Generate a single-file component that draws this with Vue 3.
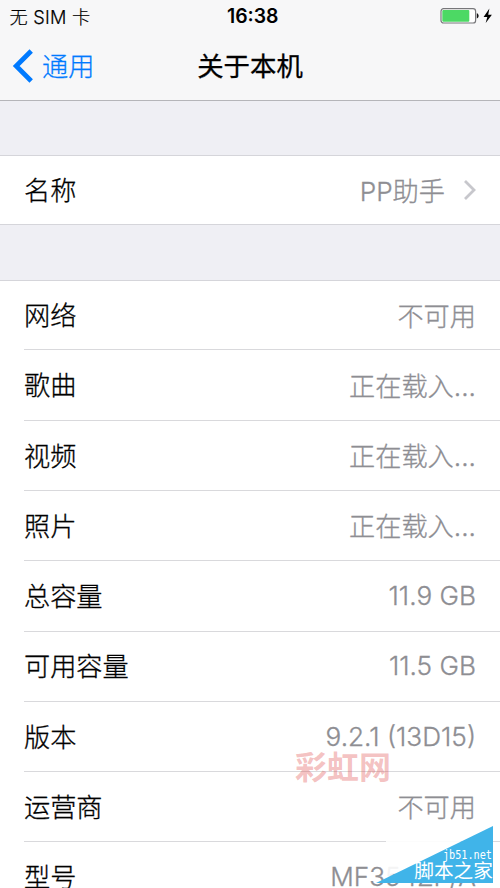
<script setup>
const rows = [
  { label: '网络', value: '不可用' },
  { label: '歌曲', value: '正在载入...' },
  { label: '视频', value: '正在载入...' },
  { label: '照片', value: '正在载入...' },
  { label: '总容量', value: '11.9 GB' },
  { label: '可用容量', value: '11.5 GB' },
  { label: '版本', value: '9.2.1 (13D15)' },
  { label: '运营商', value: '不可用' },
  { label: '型号', value: 'MF354ZP/A' },
]
</script>

<template>
  <div class="screen">
    <header class="top">
      <div class="status">
        <span class="carrier">无 SIM 卡</span>
        <span class="time">16:38</span>
        <span class="power">
          <svg width="54" height="18" viewBox="0 0 54 18">
            <rect x="1" y="1.7" width="34.6" height="14.3" rx="2.6" fill="#fff" stroke="#77777a" stroke-width="1.2" />
            <rect x="2.3" y="3" width="27" height="11.7" rx="1" fill="#4cd964" />
            <path d="M36.8 6.3c2.4.6 2.4 4.6 0 5.2z" fill="#111" />
            <path d="M49.4 1.6 43.6 9.9h3.7l-1.6 6 6.2-8.2h-3.7z" fill="#000" />
          </svg>
        </span>
      </div>
      <nav class="nav">
        <a class="back">
          <svg width="22" height="34" viewBox="0 0 22 34">
            <path d="M19.2 2 4.2 17l15 15" fill="none" stroke="#007aff" stroke-width="4.8" />
          </svg>
          <span class="nav-text">通用</span>
        </a>
        <h1 class="title nav-text">关于本机</h1>
        <span></span>
      </nav>
    </header>

    <section class="group name-group">
      <div class="row">
        <span class="label">名称</span>
        <span class="value">PP助手</span>
        <svg class="chevron" width="14" height="22" viewBox="0 0 14 22">
          <path d="M2 2l9 9-9 9" fill="none" stroke="#c7c7cc" stroke-width="2.8" />
        </svg>
      </div>
    </section>

    <section class="group">
      <div v-for="row in rows" :key="row.label" class="row">
        <span class="label">{{ row.label }}</span>
        <span class="value">{{ row.value }}</span>
      </div>
    </section>

    <div class="stamp">彩虹网</div>
    <div class="corner">
      <svg width="117" height="57" viewBox="0 0 117 57">
        <path d="M10 15 62 8 90 13 10 52z" fill="#fff" fill-opacity=".9" />
        <path d="M0 57 117 0v57z" fill="#40b4e9" />
      </svg>
      <span class="site">jb51.net</span>
      <span class="site-name">脚本之家</span>
    </div>
  </div>
</template>

<style>
body {
  background: #efeff4;
}
</style>

<style scoped>
.screen {
  position: relative;
  width: 500px;
  height: 888px;
  overflow: hidden;
  background: #efeff4;
  color: #000;
  font-family: Inter, "Noto Sans CJK SC", sans-serif;
}
.top {
  box-sizing: border-box;
  height: 101px;
  background: #f7f7f8;
  border-bottom: 1px solid #b5b5b9;
}
.status,
.nav {
  display: grid;
  grid-template-columns: 1fr auto 1fr;
  align-items: center;
}
.status {
  height: 32px;
  padding: 0 6px 0 9.5px;
}
.carrier {
  font-size: 18.2px;
  font-weight: 300;
  letter-spacing: 0.25px;
  padding-bottom: 1px;
  -webkit-text-stroke: 0.2px currentColor;
}
.time {
  font-size: 19.4px;
  font-weight: 600;
  padding-left: 2px;
}
.power {
  display: flex;
  justify-content: flex-end;
}
.nav {
  height: 68px;
  padding: 0 12px;
}
.nav-text {
  padding-bottom: 3px;
}
.back {
  display: flex;
  align-items: center;
  gap: 8px;
  color: #007aff;
  font-size: 26.2px;
  font-weight: 300;
  -webkit-text-stroke: 0.25px currentColor;
}
.title {
  margin: 0;
  font-size: 26.4px;
  font-weight: 400;
  -webkit-text-stroke: 0.3px #000;
}
.group {
  border-top: 1px solid #d5d5da;
  background: #fff;
}
.name-group {
  margin: 54px 0 55px;
  border-bottom: 1px solid #d5d5da;
}
.row {
  box-sizing: border-box;
  display: flex;
  align-items: center;
  height: 70.31px;
  margin-left: 24px;
  padding-right: 24px;
  border-bottom: 1px solid #d9d9dc;
  font-size: 26.2px;
  font-weight: 300;
  white-space: nowrap;
}
.row:first-child {
  height: 69.4px;
}
.name-group .row:first-child {
  height: 68px;
  border-bottom: 0;
  padding-right: 23px;
}
.label,
.value {
  padding-bottom: 1.6px;
  -webkit-text-stroke: 0.3px currentColor;
}
.value {
  margin-left: auto;
  color: #8e8e93;
  padding-bottom: 1px;
}
.chevron {
  margin-left: 18px;
}
.stamp {
  position: absolute;
  left: 295px;
  top: 750px;
  font-size: 32px;
  line-height: 36px;
  font-weight: 700;
  color: rgba(224, 82, 82, 0.36);
}
.corner {
  position: absolute;
  left: 376px;
  top: 826px;
  width: 117px;
  height: 57px;
  color: #fff;
}
.corner svg {
  display: block;
}
.site,
.site-name {
  position: absolute;
  right: 1px;
  white-space: nowrap;
}
.site {
  top: 23px;
  font-family: "DejaVu Sans Mono", monospace;
  font-size: 10.2px;
  line-height: 14px;
  transform: scaleY(1.12);
}
.site-name {
  top: 34px;
  right: 0;
  font-size: 19.7px;
  line-height: 22px;
}
</style>
